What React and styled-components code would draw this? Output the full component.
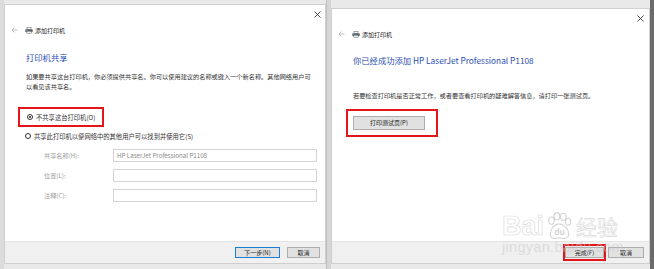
import React from "react";
import styled, { createGlobalStyle } from "styled-components";

const Global = createGlobalStyle`
  html, body { margin: 0; padding: 0; background: #ececec; }
  body { font-family: "Noto Sans CJK SC", "Noto Sans", sans-serif; }
`;

const Page = styled.div`
  width: 654px;
  height: 269px;
  display: flex;
  align-items: flex-start;
  background: #e9e9e9;
  overflow: hidden;
  position: relative;
`;

const LeftGutter = styled.div`
  width: 4px;
  height: 269px;
  background: #dcdcdc;
`;

const Window = styled.div`
  position: relative;
  margin-top: ${(p) => p.$top}px;
  width: ${(p) => p.$w}px;
  height: ${(p) => p.$h}px;
  background: #fff;
  border: 1px solid #cfcfcf;
  box-sizing: border-box;
  display: flex;
  flex-direction: column;
  font-size: 6.3px;
  color: #333;
`;

const Divider = styled.div`
  width: 5px;
  height: 269px;
  background: #d6d6d6;
  border-left: 1px solid #bdbdbd;
  box-sizing: border-box;
`;

const RightEdge = styled.div`
  width: 4px;
  height: 269px;
  background: #6b6b6b;
`;

const TopBar = styled.div`
  height: 19px;
  display: flex;
  justify-content: flex-end;
  align-items: center;
  padding-right: ${(p) => p.$pr}px;
`;

const CloseX = styled.svg`
  width: 7px;
  height: 7px;
`;

const TitleRow = styled.div`
  height: 12px;
  display: flex;
  align-items: center;
  padding-left: 6px;
`;

const BackArrow = styled.svg`
  width: 7px;
  height: 6px;
  margin-right: 7px;
`;

const PrinterIcon = styled.svg`
  width: 8px;
  height: 7px;
  margin-right: 2px;
`;

const TitleText = styled.span`
  font-size: 6px;
  color: #222;
`;

const Body = styled.div`
  flex: 1;
  padding-left: 21px;
  padding-right: 10px;
  display: flex;
  flex-direction: column;
  align-items: flex-start;
`;

const Heading = styled.div`
  margin-top: ${(p) => p.$mt}px;
  font-size: 8.3px;
  line-height: 12px;
  color: #2c4fb5;
  white-space: nowrap;
`;

const Para = styled.div`
  margin-top: ${(p) => p.$mt}px;
  line-height: 9.5px;
  font-size: 6.2px;
  color: #333;
  white-space: ${(p) => (p.$nowrap ? "nowrap" : "normal")};
`;

const RedBox = styled.div`
  border: 2px solid #e3151b;
  box-sizing: border-box;
  display: flex;
  align-items: center;
  margin-top: ${(p) => p.$mt}px;
  margin-left: ${(p) => p.$ml}px;
  width: ${(p) => p.$w}px;
  height: ${(p) => p.$h}px;
  padding-left: ${(p) => p.$pl}px;
`;

const RadioRow = styled.div`
  display: flex;
  align-items: center;
  height: 10px;
  margin-top: ${(p) => p.$mt || 0}px;
  margin-left: ${(p) => p.$ml || 0}px;
  white-space: nowrap;
`;

const RadioCircle = styled.span`
  width: 6px;
  height: 6px;
  border-radius: 50%;
  border: 1px solid #333;
  box-sizing: border-box;
  margin-right: 3px;
  display: flex;
  align-items: center;
  justify-content: center;
  &::after {
    content: "";
    width: 2.4px;
    height: 2.4px;
    border-radius: 50%;
    background: ${(p) => (p.$checked ? "#222" : "transparent")};
  }
`;

const FieldGrid = styled.div`
  display: grid;
  grid-template-columns: 69px 204px;
  row-gap: 7px;
  align-items: center;
  margin-top: ${(p) => p.$mt}px;
  margin-left: 18px;
`;

const FieldLabel = styled.span`
  color: #9b9b9b;
  font-size: 6.2px;
`;

const Input = styled.div`
  height: 13px;
  border: 1px solid #d4d4d4;
  box-sizing: border-box;
  display: flex;
  align-items: center;
  padding-left: 3px;
  color: #8a8a8a;
  font-size: 6.2px;
  white-space: nowrap;
`;

const Footer = styled.div`
  height: ${(p) => p.$h}px;
  background: #f0f0f0;
  border-top: 1px solid #e4e4e4;
  box-sizing: border-box;
  display: flex;
  align-items: center;
  justify-content: flex-end;
  padding-right: ${(p) => p.$pr}px;
  gap: ${(p) => p.$gap}px;
`;

const Button = styled.div`
  width: ${(p) => p.$w}px;
  height: ${(p) => p.$h || 11}px;
  box-sizing: border-box;
  background: #e1e1e1;
  border: 1px solid ${(p) => (p.$default ? "#1a7fd4" : "#adadad")};
  display: flex;
  align-items: center;
  justify-content: center;
  font-size: 6px;
  color: #222;
  white-space: nowrap;
`;

const FooterRed = styled.div`
  border: 2px solid #e3151b;
  box-sizing: border-box;
  width: 43px;
  height: 17px;
  display: flex;
  align-items: center;
  justify-content: center;
  margin-right: -2px;
`;

const Watermark = styled.div`
  position: absolute;
  left: 170px;
  top: 203px;
  display: flex;
  flex-direction: column;
  align-items: flex-start;
  pointer-events: none;
  font-family: "Liberation Sans", Arial, sans-serif;
`;

const WmTop = styled.div`
  display: flex;
  align-items: center;
  font-size: 27px;
  font-weight: bold;
  line-height: 27px;
  -webkit-text-stroke: 0.7px rgba(170, 170, 170, 0.45);
  color: rgba(255, 255, 255, 0.3);
`;

const WmCn = styled.span`
  font-family: "Noto Sans CJK SC", sans-serif;
  font-size: 21px;
  font-weight: 400;
  margin-left: 2px;
`;

const WmBottom = styled.div`
  font-size: 14.5px;
  line-height: 15px;
  margin-top: 0;
  letter-spacing: 0.3px;
  color: rgba(200, 200, 200, 0.5);
`;

const Paw = styled.svg`
  width: 28px;
  height: 28px;
  margin: 0 1px;
`;

function Close() {
  return (
    <CloseX viewBox="0 0 7 7">
      <path d="M0.5 0.5 L6.5 6.5 M6.5 0.5 L0.5 6.5" stroke="#333" strokeWidth="0.9" />
    </CloseX>
  );
}

function Title() {
  return (
    <TitleRow>
      <BackArrow viewBox="0 0 7 6">
        <path d="M6.5 3 H1 M3.5 0.5 L1 3 L3.5 5.5" stroke="#b0b0b0" strokeWidth="0.8" fill="none" />
      </BackArrow>
      <PrinterIcon viewBox="0 0 8 7">
        <rect x="2" y="0.3" width="4" height="2" fill="#fff" stroke="#555" strokeWidth="0.5" />
        <rect x="0.3" y="2.2" width="7.4" height="3" rx="0.6" fill="#5b6470" />
        <rect x="1.8" y="4.2" width="4.4" height="2.5" fill="#e9eef2" stroke="#555" strokeWidth="0.4" />
        <rect x="1.2" y="3" width="1" height="0.6" fill="#6fc3ff" />
      </PrinterIcon>
      <TitleText>添加打印机</TitleText>
    </TitleRow>
  );
}

export default function App() {
  return (
    <>
      <Global />
      <Page>
        <LeftGutter />
        <Window $top={4} $w={322} $h={260}>
          <TopBar $pr={4}>
            <Close />
          </TopBar>
          <Title />
          <Body>
            <Heading $mt={15}>打印机共享</Heading>
            <Para $mt={9}>
              如果要共享这台打印机，你必须提供共享名。你可以使用建议的名称或键入一个新名称。其他网络用户可以看见该共享名。
            </Para>
            <RedBox $mt={16} $ml={-8} $w={86} $h={20} $pl={7}>
              <RadioCircle $checked />
              <span>不共享这台打印机(O)</span>
            </RedBox>
            <RadioRow $mt={4} $ml={-1}>
              <RadioCircle />
              <span>共享此打印机以便网络中的其他用户可以找到并使用它(S)</span>
            </RadioRow>
            <FieldGrid $mt={8}>
              <FieldLabel>共享名称(H):</FieldLabel>
              <Input>HP LaserJet Professional P1108</Input>
              <FieldLabel>位置(L):</FieldLabel>
              <Input />
              <FieldLabel>注释(C):</FieldLabel>
              <Input />
            </FieldGrid>
          </Body>
          <Footer $h={22} $pr={5} $gap={7}>
            <Button $w={45} $default>下一步(N)</Button>
            <Button $w={33}>取消</Button>
          </Footer>
        </Window>
        <Divider />
        <Window $top={8} $w={319} $h={256}>
          <TopBar $pr={5}>
            <Close />
          </TopBar>
          <Title />
          <Body>
            <Heading $mt={14}>你已经成功添加 HP LaserJet Professional P1108</Heading>
            <Para $mt={25} $nowrap>
              若要检查打印机是否正常工作，或者要查看打印机的疑难解答信息，请打印一张测试页。
            </Para>
            <RedBox $mt={8} $ml={-7} $w={92} $h={28} $pl={5}>
              <Button $w={72} $h={14}>打印测试页(P)</Button>
            </RedBox>
          </Body>
          <Footer $h={22} $pr={5} $gap={4}>
            <FooterRed>
              <Button $w={39}>完成(F)</Button>
            </FooterRed>
            <Button $w={36}>取消</Button>
          </Footer>
          <Watermark>
            <WmTop>
              Bai
              <Paw viewBox="0 0 26 26">
                <g fill="rgba(255,255,255,0.3)" stroke="rgba(170,170,170,0.5)" strokeWidth="1">
                  <ellipse cx="6" cy="8" rx="2.6" ry="3.4" />
                  <ellipse cx="11" cy="4" rx="2.6" ry="3.4" />
                  <ellipse cx="17" cy="4.5" rx="2.6" ry="3.4" />
                  <ellipse cx="21.5" cy="9" rx="2.4" ry="3.2" />
                  <path d="M5 21 C5 15 9 11 13 11 C17 11 22 15 22 21 C22 25 17 25 13 24 C9 25 5 25 5 21 Z" />
                </g>
                <text x="13.5" y="21" textAnchor="middle" fontSize="8" fontWeight="bold" fill="rgba(170,170,170,0.55)" fontFamily="Liberation Sans, sans-serif">du</text>
              </Paw>
              <WmCn>经验</WmCn>
            </WmTop>
            <WmBottom>jingyan.baidu.com</WmBottom>
          </Watermark>
        </Window>
        <RightEdge />
      </Page>
    </>
  );
}
